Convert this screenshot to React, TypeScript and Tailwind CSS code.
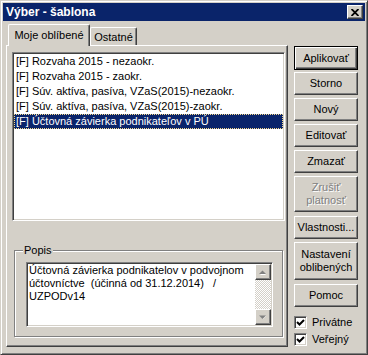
import type { ReactNode } from "react";

const FONT = "font-['Liberation_Sans',Arial,sans-serif]";

const ITEMS = [
  "[F] Rozvaha 2015 - nezaokr.",
  "[F] Rozvaha 2015 - zaokr.",
  "[F] Súv. aktíva, pasíva, VZaS(2015)-nezaokr.",
  "[F] Súv. aktíva, pasíva, VZaS(2015)-zaokr.",
  "[F] Účtovná závierka podnikateľov v PÚ",
];

function Button({
  children,
  className = "",
  isDefault = false,
  disabled = false,
}: {
  children: ReactNode;
  className?: string;
  isDefault?: boolean;
  disabled?: boolean;
}) {
  const frame = isDefault
    ? "border border-black shadow-[inset_1px_1px_0_#fff,inset_-1px_-1px_0_#404040,inset_-2px_-2px_0_#808080]"
    : "border border-t-white border-l-white border-r-[#404040] border-b-[#404040] shadow-[inset_-1px_-1px_0_#808080]";
  return (
    <div
      className={`flex w-[64px] flex-col items-center justify-center whitespace-nowrap bg-[#d4d0c8] text-center leading-[13px] ${frame} ${
        disabled ? "text-[#808080] [text-shadow:1px_1px_0_#fff]" : "text-black"
      } ${className}`}
    >
      {children}
    </div>
  );
}

function Check({ label }: { label: string }) {
  return (
    <div className="flex h-[17px] items-center gap-[5px]">
      <div className="flex h-[13px] w-[13px] items-center justify-center border border-t-[#808080] border-l-[#808080] border-r-white border-b-white bg-white shadow-[inset_1px_1px_0_#404040,inset_-1px_-1px_0_#d4d0c8]">
        <svg width="9" height="9" viewBox="0 0 9 9">
          <path d="M1 4 L3.5 6.5 L8 2" fill="none" stroke="#000" strokeWidth="2" />
        </svg>
      </div>
      <span>{label}</span>
    </div>
  );
}

function Arrow({ up }: { up?: boolean }) {
  return (
    <div className="flex h-[16px] w-[16px] items-center justify-center border border-t-white border-l-white border-r-[#404040] border-b-[#404040] bg-[#d4d0c8] shadow-[inset_-1px_-1px_0_#808080]">
      <svg width="8" height="5" viewBox="0 0 8 5">
        {up ? (
          <>
            <path d="M1 5 L4 2 L7 5 Z" fill="#fff" />
            <path d="M0 4 L3.5 0.5 L7 4 Z" fill="#808080" />
          </>
        ) : (
          <>
            <path d="M1 1 L4 4 L7 1 Z" fill="#fff" />
            <path d="M0 0.5 L3.5 4 L7 0.5 Z" fill="#808080" />
          </>
        )}
      </svg>
    </div>
  );
}

export default function App() {
  return (
    <div
      className={`${FONT} h-[355px] w-[368px] border border-t-[#d4d0c8] border-l-[#d4d0c8] border-r-[#404040] border-b-[#404040] bg-[#d4d0c8] p-[2px] text-[11px] text-black shadow-[inset_1px_1px_0_#fff,inset_-1px_-1px_0_#808080]`}
    >
      {/* Title bar */}
      <div className="flex h-[18px] items-center justify-between bg-[#0a246a] pl-[3px] pr-[2px]">
        <span className="text-[12px] font-bold text-white">Výber - šablona</span>
        <div className="flex h-[14px] w-[16px] items-center justify-center border border-t-white border-l-white border-r-[#404040] border-b-[#404040] bg-[#d4d0c8] shadow-[inset_-1px_-1px_0_#808080]">
          <svg width="8" height="7" viewBox="0 0 8 7">
            <path d="M0.5 0 L7.5 7 M7.5 0 L0.5 7" stroke="#000" strokeWidth="1.8" />
          </svg>
        </div>
      </div>

      <div className="flex">
        {/* Tab control */}
        <div className="ml-[3px] mt-[3px] flex w-[282px] flex-col">
          <div className="flex h-[21px] items-end pl-[2px]">
            <div className="relative z-10 -mb-px flex h-[22px] w-[82px] items-center justify-center whitespace-nowrap rounded-t-[2px] border border-b-0 border-t-white border-l-white border-r-[#404040] bg-[#d4d0c8] shadow-[inset_-1px_0_0_#808080]">
              Moje oblíbené
            </div>
            <div className="flex h-[18px] w-[47px] items-center justify-center whitespace-nowrap rounded-t-[2px] border border-b-0 border-t-white border-l-white border-r-[#404040] bg-[#d4d0c8] pt-[1px] shadow-[inset_-1px_0_0_#808080]">
              Ostatné
            </div>
          </div>

          <div className="flex h-[302px] flex-col border border-t-white border-l-white border-r-[#404040] border-b-[#404040] pl-[5px] pt-[6px] shadow-[inset_-1px_-1px_0_#808080]">
            {/* List */}
            <div className="h-[169px] w-[273px] border border-t-[#808080] border-l-[#808080] border-r-white border-b-white bg-white p-[1px] shadow-[inset_1px_1px_0_#404040,inset_-1px_-1px_0_#d4d0c8]">
              {ITEMS.map((item, i) =>
                i === ITEMS.length - 1 ? (
                  <div
                    key={item}
                    className="h-[15px] whitespace-nowrap border border-dotted border-[#f5d98a] bg-[#0a246a] pl-[1px] leading-[13px] text-white"
                  >
                    {item}
                  </div>
                ) : (
                  <div key={item} className="h-[15px] whitespace-nowrap pl-[2px] leading-[15px]">
                    {item}
                  </div>
                )
              )}
            </div>

            {/* Popis group */}
            <div className="relative ml-[2px] mt-[29px] h-[87px] w-[269px] border border-[#808080] pl-[11px] pt-[11px] shadow-[inset_1px_1px_0_#fff,1px_1px_0_#fff]">
              <span className="absolute -top-[7px] left-[8px] bg-[#d4d0c8] px-[1px] leading-[13px]">Popis</span>
              <div className="flex h-[65px] w-[247px] border border-t-[#808080] border-l-[#808080] border-r-white border-b-white bg-white p-[1px] shadow-[inset_1px_1px_0_#404040,inset_-1px_-1px_0_#d4d0c8]">
                <div className="flex-1 overflow-hidden whitespace-pre pl-[1px] leading-[13px]">
                  <div>Účtovná závierka podnikatelov v podvojnom</div>
                  <div>účtovníctve  (účinná od 31.12.2014)   /</div>
                  <div>UZPODv14</div>
                </div>
                <div className="flex w-[16px] flex-col">
                  <Arrow up />
                  <div className="flex-1 bg-[repeating-conic-gradient(#fff_0_25%,#d4d0c8_0_50%)] bg-[length:2px_2px]" />
                  <Arrow />
                </div>
              </div>
            </div>
          </div>
        </div>

        {/* Buttons */}
        <div className="ml-[6px] mt-[25px] flex flex-col">
          <Button isDefault className="h-[24px]">Aplikovať</Button>
          <Button className="mt-[2px] h-[23px]">Storno</Button>
          <Button className="mt-[3px] h-[23px]">Nový</Button>
          <Button className="mt-[3px] h-[23px]">Editovať</Button>
          <Button className="mt-[3px] h-[23px]">Zmazať</Button>
          <Button disabled className="mt-[3px] h-[36px]">
            <span>Zrušiť</span>
            <span>platnosť</span>
          </Button>
          <Button className="mt-[4px] h-[23px]">Vlastnosti...</Button>
          <Button className="mt-[3px] h-[38px]">
            <span>Nastavení</span>
            <span>oblibených</span>
          </Button>
          <Button className="mt-[4px] h-[23px]">Pomoc</Button>
          <div className="mt-[7px] flex flex-col">
            <Check label="Privátne" />
            <Check label="Veřejný" />
          </div>
        </div>
      </div>
    </div>
  );
}
